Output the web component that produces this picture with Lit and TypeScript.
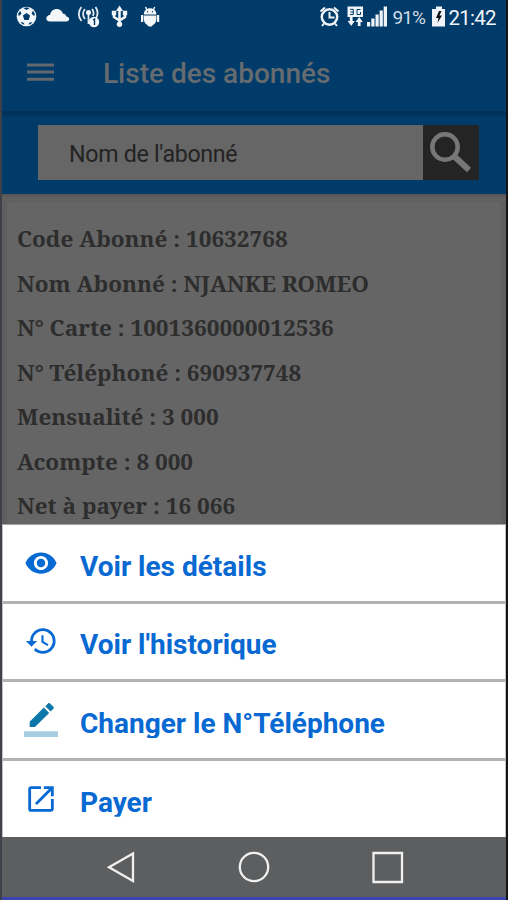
import { LitElement, html, css, svg } from "lit";
import { customElement } from "lit/decorators.js";

const rows = [
  "Code Abonné : 10632768",
  "Nom Abonné : NJANKE ROMEO",
  "N° Carte : 1001360000012536",
  "N° Téléphoné : 690937748",
  "Mensualité : 3 000",
  "Acompte : 8 000",
  "Net à payer : 16 066",
];

const eye = svg`<path d="M12 4.5C7 4.5 2.73 7.61 1 12c1.73 4.39 6 7.5 11 7.5s9.27-3.11 11-7.5c-1.73-4.39-6-7.5-11-7.5zM12 17c-2.76 0-5-2.24-5-5s2.24-5 5-5 5 2.24 5 5-2.24 5-5 5zm0-8c-1.66 0-3 1.34-3 3s1.34 3 3 3 3-1.34 3-3-1.34-3-3-3z"/>`;
const history = svg`<path transform="translate(.3 0)" d="M13 3a9 9 0 0 0-9 9H1l3.89 3.89.07.14L9 12H6c0-3.87 3.13-7 7-7s7 3.13 7 7-3.13 7-7 7c-1.93 0-3.68-.79-4.94-2.06l-1.42 1.42A8.954 8.954 0 0 0 13 21a9 9 0 0 0 0-18zm-1 5v5l4.28 2.54.72-1.21-3.5-2.08V8H12z" />`;
const pencil = svg`<g fill="#0b78a8"><path d="M17.75 7 14 3.25l-10 10V17h3.75l10-10zm2.96-2.96a1 1 0 0 0 0-1.41L18.37.29a1 1 0 0 0-1.41 0L15 2.25 18.75 6l1.96-1.96z"/><path opacity=".36" d="M0 20h24v4H0z"/></g>`;
const launch = svg`<path d="M19 19H5V5h7V3H5a2 2 0 0 0-2 2v14a2 2 0 0 0 2 2h14c1.1 0 2-.9 2-2v-7h-2v7zM14 3v2h3.59l-9.83 9.83 1.41 1.41L19 6.41V10h2V3h-7z"/>`;

const actions = [
  { label: "Voir les détails", icon: eye },
  { label: "Voir l'historique", icon: history },
  { label: "Changer le N°Téléphone", icon: pencil },
  { label: "Payer", icon: launch },
];

@customElement("app-root")
export class AppRoot extends LitElement {
  static styles = css`
    :host { display: block; width: 508px; height: 900px; overflow: hidden; font-family: Roboto, sans-serif; }
    * { box-sizing: border-box; }
    svg { display: block; flex: none; }
    .frame { display: flex; flex-direction: column; height: 900px; border-left: 2px solid #3e4147; border-right: 2px solid #141414; background: #646464; }
    .frame > * { flex: none; }
    .status { display: flex; justify-content: space-between; height: 34px; background: #003b69; color: #e8edf2; }
    .status text { font-family: Roboto, sans-serif; }
    .bar { display: flex; align-items: center; height: 77px; padding: 0 0 1px 25px; background: #003b69; color: #666b70; }
    .title { margin: 4px 0 0 49px; font-size: 28px; font-weight: 500; line-height: 32px; white-space: nowrap; }
    .search { display: flex; height: 83px; padding: 14px 27px 14px 36px; background: linear-gradient(#002f55 0, #003560 4px, #003b69 6px); }
    .field { flex: 1; padding: 0 0 0 31px; background: #666; color: #232323; font-size: 23.2px; line-height: 58px; letter-spacing: -0.3px; white-space: nowrap; }
    .find { width: 56px; height: 55px; background: #242424; }
    .frame > .body { flex: 1 1 0; min-height: 0; padding: 8px 5px 0 5px; background: linear-gradient(#585555 0, #636262 5px, #5e5e5e 9px); }
    .card { height: 100%; padding: 15px 0 0 10px; border-radius: 4px 4px 0 0; background: #656565; overflow: hidden; }
    .row { height: 44.5px; font-family: "Noto Serif", "DejaVu Serif", serif; font-size: 22.5px; font-weight: 700; line-height: 44.5px; color: #2d2d2d; white-space: nowrap; }
    .sheet { display: flex; flex-direction: column; height: 313px; border: 1px solid #c0c0c0; border-top-color: #a5a5a5; border-bottom: 0; background: #fff; }
    .action { display: flex; align-items: center; height: 78.6px; padding: 0 0 0 21px; border-bottom: 3px solid #b1b1b1; color: #0869d2; }
    .action:last-child { border-bottom: 0; height: 76px; }
    .icon { display: grid; place-items: center; width: 34px; height: 60px; fill: currentColor; }
    .label { margin: 8px 0 0 22px; font-size: 28px; font-weight: 700; line-height: 32px; white-space: nowrap; clip-path: inset(0 0 2px 0); }
    .nav { display: flex; height: 60px; background: #5d5e5f; }
    .edge { height: 3px; background: #3a43ae; }
  `;

  render() {
    return html`<div class="frame">
      <div class="status">
        <svg width="170" height="34" viewBox="2 0 170 34" fill="#f4f7fa">
          <circle cx="26.500" cy="16.500" r="9.800" />
          <g fill="#003b69">
            <path d="m26.500 13 3.600 2.600-1.400 4.300h-4.400l-1.400-4.300zM23.500 8.300l3-1 3 1-3 1.700zM18.200 13.500l2-2.800 1.200 3-2.700 2.600zM34.800 13.500l-2-2.800-1.200 3 2.700 2.600zM20.300 22.300l3 .2 1.300 2.100-2-.3zM32.700 22.300l-3 .2-1.300 2.100 2-.3z" />
          </g>
          <path d="M50 21.500c-5 0-4.800-6.200 0-6.500 1.200-7.500 11.200-8 13-1.300 2.500-.2 3 1.600 3 2.500 4.500.8 3.800 5.300.5 5.300z" />
          <g fill="none" stroke="#e5ebf1" stroke-width="1.800">
            <path d="M81.500 7a10.500 10.500 0 0 0 0 14M85 9a7.500 7.500 0 0 0 0 10M95.500 7a10.500 10.500 0 0 1 0 12M92 9a7 7 0 0 1 1 7M88.500 14v10" />
          </g>
          <circle cx="88.500" cy="12.500" r="2.500" /><circle cx="94" cy="22" r="5.200" />
          <path d="m93 20 1.500-1v6" fill="none" stroke="#003b69" stroke-width="1.400" />
          <path d="M119.500 8v15M114 13v4l5.500 3.500L125 17v-4" fill="none" stroke="#f4f7fa" stroke-width="2.500" />
          <path d="m119.500 5.500 3.500 5.500h-7zM111.800 10.800h4.400v4.400h-4.400zM122.800 10.800h4.400v4.400h-4.400z" /><circle cx="119.500" cy="24.200" r="2.700" />
          <path d="M143.800 14.500c0-8.500 12.600-8.500 12.600 0zM143.800 15.500h12.600v4.500q-1 4-3.500 5l-1.300 1.500h-3l-1.300-1.500q-2.500-1-3.500-5zM141 15h2.200v7h-2.200zM157 15h2.200v7H157z" />
          <path d="m145.500 7 1.500 3M154.700 7l-1.500 3" stroke="#f4f7fa" stroke-width="1.500" />
          <circle cx="147.600" cy="11.700" r=".7" fill="#003b69" /><circle cx="152.500" cy="11.700" r=".7" fill="#003b69" />
        </svg>
        <svg width="190" height="34" viewBox="316 0 190 34" fill="#f0f4f8">
          <circle cx="329.500" cy="17" r="7.700" fill="none" stroke="#f0f4f8" stroke-width="2.500" />
          <path d="M329.500 12v5.500h5M320.500 11.500l4.500-4M338.500 11.500l-4.500-4M324 23.500l-2 2.500M335 23.500l2 2.500" fill="none" stroke="#f0f4f8" stroke-width="2" />
          <path d="M347.500 6.500h15.500v10.500h-15.500z" />
          <path d="M350 9.300h3.300v5.200H350M350.500 12h3M360.500 9.500H357v5h3.500v-2.500" fill="none" stroke="#003b69" stroke-width="1" />
          <path d="M349.800 17h2.800v4h2.200l-3.600 5-3.600-5h2.200zM357.800 26h2.800v-4h2.200l-3.600-5-3.600 5h2.200z" />
          <path d="M367 22h3.200v4.500H367zM371.300 18.500h3.200v8h-3.200zM375.500 14.500h3.200v12h-3.200zM379.600 10.500h3.200v16h-3.200zM383.700 6.500h3.300v20h-3.300z" />
          <text x="392.500" y="24" font-size="19" textLength="33.500" fill="#d2dce5">91%</text>
          <path d="M436 6.500h6V9h3v17.500h-13V9h4z" /><path d="m439 11-3 7h2.500l-1 5 4.500-7.500h-2.500L441.500 11z" fill="#111" />
          <text x="448.500" y="24.500" font-size="20.500" textLength="48">21:42</text>
        </svg>
      </div>
      <div class="bar">
        <svg width="27" height="20" viewBox="0 0 27 20"><path d="M0 3h27M0 10h27M0 17.300h27" stroke="#62686d" stroke-width="3" /></svg>
        <h1 class="title">Liste des abonnés</h1>
      </div>
      <div class="search">
        <div class="field">Nom de l'abonné</div>
        <div class="find">
          <svg width="56" height="55" viewBox="0 0 56 55" fill="none" stroke="#777"><circle cx="22" cy="22" r="12.700" stroke-width="4.500" /><path d="m32 32 14 13" stroke-width="6" /></svg>
        </div>
      </div>
      <div class="body"><div class="card">
        ${rows.map((text) => html`<div class="row">${text}</div>`)}
      </div></div>
      <div class="sheet">
        ${actions.map((a) => html`<div class="action">
          <div class="icon"><svg width="34" height="34" viewBox="0 0 24 24">${a.icon}</svg></div>
          <div class="label">${a.label}</div>
        </div>`)}
      </div>
      <div class="nav">
        <svg width="504" height="60" viewBox="2 837 504 60" fill="none" stroke="#f0f0f0" stroke-width="2.300">
          <path d="M133 853.500v27.500l-24-13.800z" /><circle cx="254" cy="867" r="14.200" /><path d="M373.500 853h28.500v29h-28.500z" />
        </svg>
      </div>
      <div class="edge"></div>
    </div>`;
  }
}
